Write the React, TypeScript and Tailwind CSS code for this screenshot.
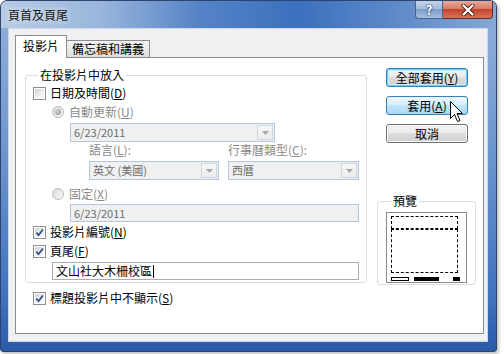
import React from 'react';

const Acc = ({ k }: { k: string }) => (
  <span>
    (<span className="underline underline-offset-[1px]">{k}</span>)
  </span>
);

const CheckBox = ({ checked }: { checked?: boolean }) => (
  <span className="flex h-[13px] w-[13px] shrink-0 border border-[#8e8f8f] bg-white p-[1px]">
    <span className="flex flex-1 items-center justify-center bg-[linear-gradient(135deg,#cdd0d4_0%,#eceef0_55%,#fbfbfb_100%)]">
      {checked && (
        <svg width="9" height="9" viewBox="0 0 9 9">
          <path d="M1.4 4.6 L3.6 7.2 L7.9 1.4" fill="none" stroke="#2b4a8e" strokeWidth="1.7" />
        </svg>
      )}
    </span>
  </span>
);

const Radio = ({ on }: { on?: boolean }) => (
  <span className="flex h-[12px] w-[12px] shrink-0 items-center justify-center rounded-full border border-[#bcbcbc] bg-[linear-gradient(135deg,#dadada,#f8f8f8)]">
    {on && <span className="h-[6px] w-[6px] rounded-full bg-[radial-gradient(circle_at_40%_35%,#d4d4d4,#8c8c8c)]" />}
  </span>
);

const Arrow = () => (
  <svg width="7" height="4" viewBox="0 0 7 4">
    <path d="M0 0 L7 0 L3.5 4 Z" fill="#a7a7a7" />
  </svg>
);

const Combo = ({ value, className }: { value: string; className: string }) => (
  <div className={`flex h-[19px] items-stretch border border-[#b5c6da] bg-[#f0f0f0] p-[1px] ${className}`}>
    <span className="flex-1 pl-[2px] text-[11px] leading-[15px] text-[#6d6d6d]">{value}</span>
    <span className="flex w-[16px] items-center justify-center border border-[#cdd6e0] bg-[linear-gradient(180deg,#f6f6f6,#ececec)]">
      <Arrow />
    </span>
  </div>
);

const Row = ({ children, className }: { children: React.ReactNode; className: string }) => (
  <div className={`flex h-[18px] items-center ${className}`}>{children}</div>
);

const DlgButton = ({ children, kind }: { children: React.ReactNode; kind: 'default' | 'hover' | 'normal' }) => {
  const look =
    kind === 'hover'
      ? 'border-[#3c7fb1] bg-[linear-gradient(180deg,#eaf6fd_0%,#d9f0fc_45%,#bee6fd_50%,#a7d9f5_100%)]'
      : kind === 'default'
        ? 'border-[#3c7fb1] bg-[linear-gradient(180deg,#f2f2f2_0%,#ebebeb_45%,#dddddd_50%,#cfcfcf_100%)] shadow-[inset_0_0_0_1px_#6fd0f7,inset_0_0_0_2px_#c8ecfb]'
        : 'border-[#707070] bg-[linear-gradient(180deg,#f2f2f2_0%,#ebebeb_45%,#dddddd_50%,#cfcfcf_100%)] shadow-[inset_0_0_0_1px_#fcfcfc]';
  return (
    <div className={`flex h-[19px] w-[82px] items-center justify-center rounded-[3px] border text-[12px] leading-[16px] text-black ${look}`}>
      {children}
    </div>
  );
};

export default function App() {
  return (
    <div className="h-[354px] w-[504px] overflow-hidden bg-white font-['Noto_Sans_CJK_TC',sans-serif] text-[12px] leading-[16px] text-black">
      <div className="relative flex h-[352px] w-[497px] flex-col rounded-t-[7px] rounded-b-[3px] border border-[#2b4470] bg-[linear-gradient(180deg,#93b1da_0%,#7098cf_40%,#4172bd_85%,#2b5aa8_100%)] shadow-[2px_2px_3px_rgba(0,0,0,0.25)]">
        {/* title bar */}
        <div className="flex h-[27px] shrink-0 items-start justify-between rounded-t-[6px] bg-[linear-gradient(90deg,#b8cbe4_0%,#9ab6dc_20%,#5583c6_40%,#3c70be_60%,#5a87c7_78%,#86a8d6_100%)]">
          <span className="pl-[7px] pt-[6px] text-[12px] leading-[16px] text-[#111] [text-shadow:0_0_6px_rgba(255,255,255,0.95)]">
            頁首及頁尾
          </span>
          <div className="mr-[3px] flex h-[18px]">
            <div className="flex w-[28px] items-center justify-center rounded-bl-[4px] border border-t-0 border-[#4a6387] bg-[linear-gradient(180deg,#c4d5eb_0%,#a4bbdb_45%,#7f9ec8_50%,#a3c0e2_100%)] text-[13px] font-bold leading-none text-white [text-shadow:0_0_2px_#1d3050,0_0_1px_#1d3050]">
              ?
            </div>
            <div className="flex w-[50px] items-center justify-center rounded-br-[4px] border border-l-0 border-t-0 border-[#6d2a22] bg-[linear-gradient(180deg,#eaaa9b_0%,#d67c67_45%,#c5432c_50%,#d4765c_100%)]">
              <svg width="14" height="12" viewBox="0 0 14 12">
                <path d="M2.5 1.5 L11.5 10.5 M11.5 1.5 L2.5 10.5" stroke="#4b1a14" strokeWidth="4" strokeLinecap="round" />
                <path d="M2.5 1.5 L11.5 10.5 M11.5 1.5 L2.5 10.5" stroke="#ffffff" strokeWidth="2.4" strokeLinecap="round" />
              </svg>
            </div>
          </div>
        </div>

        {/* client area */}
        <div className="mb-[9px] ml-[7px] mr-[8px] flex flex-1 flex-col border border-[#c9d8ec] bg-[#f0f0f0] pb-[7px] pl-[6px] pr-[3px] pt-[6px]">
          {/* tabs */}
          <div className="flex h-[22px] items-end">
            <div className="relative z-10 -mb-px flex h-[23px] w-[52px] items-center justify-center border border-b-0 border-[#898c95] bg-white pb-[2px] text-[12px]">
              投影片
            </div>
            <div className="-ml-px flex h-[17px] w-[84px] items-center justify-center border border-b-0 border-[#898c95] bg-[linear-gradient(180deg,#f3f3f3_0%,#ebebeb_50%,#dddddd_100%)] text-[12px]">
              備忘稿和講義
            </div>
          </div>

          {/* tab panel */}
          <div className="flex flex-1 gap-[10px] border border-[#898c95] bg-white pl-[9px] pt-[9px]">
            {/* left column */}
            <div className="flex w-[342px] flex-col">
              <fieldset className="rounded-[3px] border border-[#d5dfe5] pb-[2px] pl-[7px]">
                <legend className="ml-[5px] px-[2px] leading-[16px]">在投影片中放入</legend>
                <Row className="mt-[1px] gap-[4px]">
                  <CheckBox />
                  <span>
                    日期及時間<Acc k="D" />
                  </span>
                </Row>
                <Row className="ml-[19px] mt-[1px] gap-[5px] text-[#8a8a8a]">
                  <Radio on />
                  <span>
                    自動更新<Acc k="U" />
                  </span>
                </Row>
                <Combo value="6/23/2011" className="ml-[37px] mt-[2px] w-[205px]" />
                <div className="ml-[56px] flex h-[15px] items-center text-[#8a8a8a]">
                  <span className="w-[139px]">
                    語言<Acc k="L" />:
                  </span>
                  <span>
                    行事曆類型<Acc k="C" />:
                  </span>
                </div>
                <div className="ml-[56px] mt-[4px] flex gap-[9px]">
                  <Combo value="英文 (美國)" className="w-[130px]" />
                  <Combo value="西曆" className="w-[131px]" />
                </div>
                <Row className="ml-[19px] mt-[5px] gap-[5px] text-[#8a8a8a]">
                  <Radio />
                  <span>
                    固定<Acc k="X" />
                  </span>
                </Row>
                <div className="ml-[37px] mt-[1px] flex h-[18px] w-[289px] items-center border border-[#b5c6da] bg-[#f0f0f0] pl-[3px] text-[11px] text-[#6d6d6d]">
                  6/23/2011
                </div>
                <Row className="mt-[1px] gap-[4px]">
                  <CheckBox checked />
                  <span>
                    投影片編號<Acc k="N" />
                  </span>
                </Row>
                <Row className="mt-[1px] gap-[4px]">
                  <CheckBox checked />
                  <span>
                    頁尾<Acc k="F" />
                  </span>
                </Row>
                <div className="ml-[19px] mt-[2px] flex h-[18px] w-[307px] items-center border border-[#abadb3] bg-white pl-[3px]">
                  文山社大木柵校區<span className="ml-[1px] h-[13px] w-px bg-black" />
                </div>
              </fieldset>
              <Row className="ml-[8px] mt-[6px] gap-[4px]">
                <CheckBox checked />
                <span>
                  標題投影片中不顯示<Acc k="S" />
                </span>
              </Row>
            </div>

            {/* right column */}
            <div className="flex w-[99px] flex-col">
              <div className="ml-[9px] mt-[1px] flex flex-col gap-[9px]">
                <DlgButton kind="default">
                  全部套用<Acc k="Y" />
                </DlgButton>
                <DlgButton kind="hover">
                  套用<Acc k="A" />
                </DlgButton>
                <DlgButton kind="normal">取消</DlgButton>
              </div>
              <fieldset className="mt-[50px] rounded-[3px] border border-[#d5dfe5] pb-[1px] pl-[8px]">
                <legend className="ml-[5px] px-[2px] leading-[16px]">預覽</legend>
                <div className="mt-[3px] flex h-[71px] w-[81px] flex-col border border-[#8a8a8a] bg-white px-[4px] pt-[3px]">
                  <div className="h-[13px] w-[67px] border border-dashed border-black" />
                  <div className="h-[44px] w-[67px] border border-dashed border-black" />
                  <div className="mt-[4px] flex h-[4px] items-stretch">
                    <div className="w-[18px] border border-black bg-white" />
                    <div className="ml-[5px] w-[25px] bg-black" />
                    <div className="ml-auto mr-[2px] w-[7px] bg-black" />
                  </div>
                </div>
              </fieldset>
            </div>
          </div>
        </div>

        {/* mouse pointer over 套用 */}
        <svg className="absolute left-[449px] top-[100px]" width="15" height="22" viewBox="0 0 15 22">
          <path d="M0.5 0.5 L0.5 17.5 L4.5 13.5 L7.5 20.5 L10 19.5 L7 12.5 L12.5 12.5 Z" fill="#ffffff" stroke="#000000" strokeWidth="1" strokeLinejoin="miter" />
        </svg>
      </div>
    </div>
  );
}
